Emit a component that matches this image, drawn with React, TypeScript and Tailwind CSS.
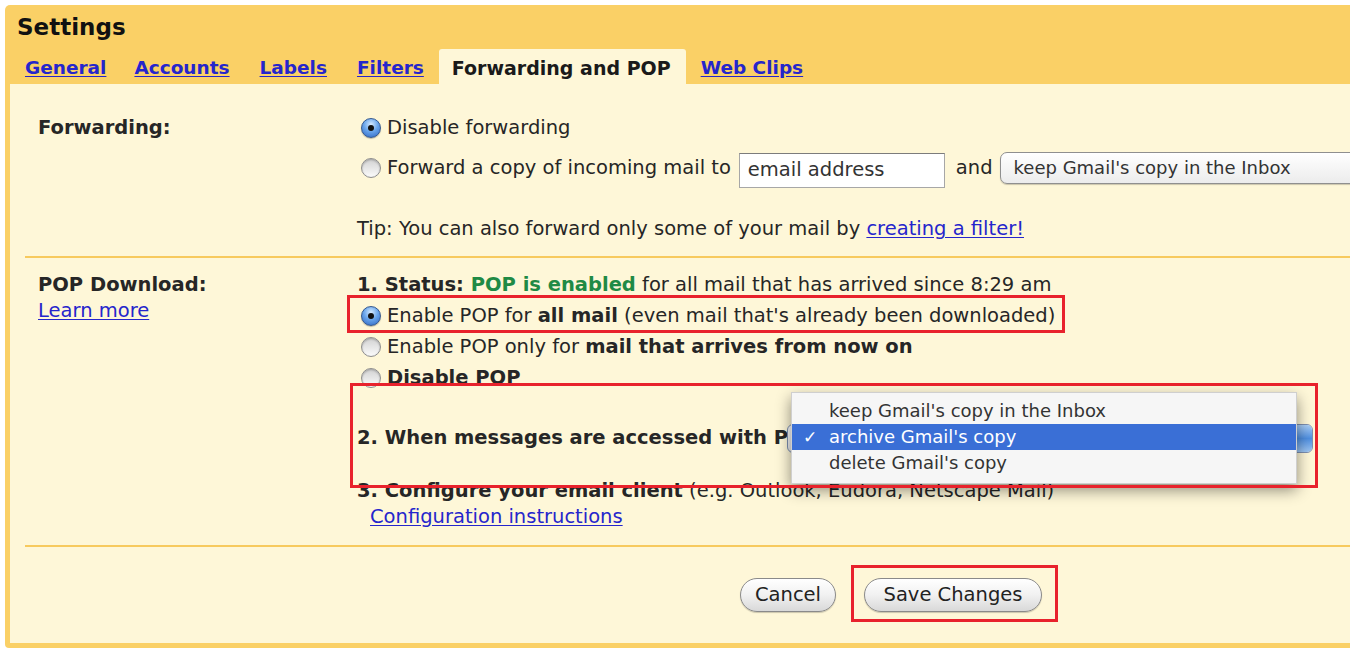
import React from "react";

function Radio({ checked }: { checked?: boolean }) {
  if (checked) {
    return (
      <span className="shrink-0 w-[20px] h-[20px] rounded-full border border-[#35598f] bg-[radial-gradient(circle_at_50%_30%,#d6ebff_0%,#6aa6ec_45%,#2b63c0_100%)] flex items-center justify-center shadow-[0_1px_1px_rgba(0,0,0,0.25)]">
        <span className="w-[6px] h-[6px] rounded-full bg-[#111]" />
      </span>
    );
  }
  return (
    <span className="shrink-0 w-[20px] h-[20px] rounded-full border border-[#8e8e8e] bg-gradient-to-b from-[#d2d2d2] to-[#fbfbfb] shadow-[inset_0_1px_2px_rgba(0,0,0,0.25)]" />
  );
}

function Link({ children }: { children: React.ReactNode }) {
  return <span className="text-[#2525cc] underline underline-offset-2">{children}</span>;
}

export default function App() {
  return (
    <div className="w-[1350px] h-[657px] overflow-hidden bg-white font-['DejaVu_Sans',sans-serif] text-[#262626] text-[19.5px] leading-none whitespace-nowrap">
      <div className="ml-[5px] mt-[5px] w-[1420px] bg-[#fad066] rounded-tl-[5px] rounded-bl-[4px] pl-[5px] pb-[5px]">
        {/* Title */}
        <div className="h-[44px] pl-[7px] flex items-center text-[23px] font-bold text-[#111]">
          Settings
        </div>
        {/* Tabs */}
        <div className="h-[35px] flex items-stretch text-[18.5px] font-bold">
          <div className="pl-[15px] pr-[14px] flex items-center pt-[3px]"><Link>General</Link></div>
          <div className="pl-[14px] pr-[15px] flex items-center pt-[3px]"><Link>Accounts</Link></div>
          <div className="pl-[15px] pr-[15px] flex items-center pt-[3px]"><Link>Labels</Link></div>
          <div className="pl-[15px] pr-[15px] flex items-center pt-[3px]"><Link>Filters</Link></div>
          <div className="pl-[13px] pr-[15px] flex items-center pt-[3px] bg-[#fef7d8] rounded-t-[3px] text-[#1a1a1a] text-[19px]">Forwarding and POP</div>
          <div className="px-[15px] flex items-center pt-[3px]"><Link>Web Clips</Link></div>
        </div>
        {/* Content */}
        <div className="bg-[#fef7d8] px-[15px]">
          {/* Forwarding */}
          <div className="flex pl-[13px] pt-[29px] pb-[15px] border-b-2 border-[#f7ca5e]">
            <div className="w-[319px] shrink-0 h-[30px] flex items-center font-bold">Forwarding:</div>
            <div className="flex flex-col">
              <div className="h-[30px] flex items-center pl-[4px]">
                <Radio checked />
                <span className="ml-[6px]">Disable forwarding</span>
              </div>
              <div className="mt-[5px] h-[40px] flex items-center pl-[4px]">
                <Radio />
                <span className="ml-[6px]">Forward a copy of incoming mail to</span>
                <div className="ml-[8px] w-[206px] h-[35px] mt-[4px] border border-[#a7a7a7] border-t-[#7c7c7c] bg-white flex items-center pl-[8px] text-[#333]">
                  email address
                </div>
                <span className="ml-[11px]">and</span>
                <div className="ml-[7px] w-[420px] h-[32px] rounded-l-[7px] border border-[#8f8f8f] bg-gradient-to-b from-white to-[#ececec] flex items-center pl-[13px] text-[18px] text-[#333] shadow-[0_1px_1px_rgba(0,0,0,0.2)]">
                  keep Gmail's copy in the Inbox
                </div>
              </div>
              <div className="mt-[29px] h-[24px] flex items-center">
                <span>Tip: You can also forward only some of your mail by&nbsp;</span>
                <Link>creating a filter!</Link>
              </div>
            </div>
          </div>

          {/* POP Download */}
          <div className="relative flex pl-[13px] pt-[11px] pb-[15px] border-b-2 border-[#f7ca5e]">
            <div className="w-[319px] shrink-0">
              <div className="h-[31px] flex items-center font-bold">POP Download:</div>
              <div className="h-[22px] flex items-center"><Link>Learn more</Link></div>
            </div>
            <div className="flex flex-col">
              <div className="h-[31px] flex items-center">
                <span className="font-bold">1. Status:&nbsp;</span>
                <span className="font-bold text-[#1f8a45]">POP is enabled</span>
                <span>&nbsp;for all mail that has arrived since 8:29 am</span>
              </div>
              <div className="h-[31px] flex items-center pl-[4px]">
                <Radio checked />
                <span className="ml-[6px]">Enable POP for&nbsp;</span>
                <span className="font-bold">all mail</span>
                <span>&nbsp;(even mail that's already been downloaded)</span>
              </div>
              <div className="h-[31px] flex items-center pl-[4px]">
                <Radio />
                <span className="ml-[6px]">Enable POP only for&nbsp;</span>
                <span className="font-bold">mail that arrives from now on</span>
              </div>
              <div className="h-[31px] flex items-center pl-[4px]">
                <Radio />
                <span className="ml-[6px] font-bold">Disable POP</span>
              </div>
              <div className="mt-[30px] h-[30px] w-[432px] overflow-hidden flex items-center font-bold">
                2. When messages are accessed with POP
              </div>
              <div className="mt-[25px] h-[26px] flex items-center">
                <span className="font-bold">3. Configure your email client</span>
                <span>&nbsp;(e.g. Outlook, Eudora, Netscape Mail)</span>
              </div>
              <div className="h-[26px] flex items-center pl-[13px]">
                <Link>Configuration instructions</Link>
              </div>
            </div>

            {/* select behind the open menu */}
            <div className="absolute left-[762px] top-[166px] w-[526px] h-[29px] rounded-[6px] border border-[#7d8fb0] bg-gradient-to-b from-white to-[#e8e8e8] overflow-hidden flex justify-end">
              <div className="w-[18px] h-full bg-gradient-to-b from-[#a9cdf5] via-[#4f8fe0] to-[#9cc4f1]" />
            </div>

            {/* open dropdown menu */}
            <div className="absolute left-[766px] top-[134px] w-[506px] h-[92px] bg-[#f6f6f6] border border-[#cfcfcf] shadow-[0_6px_14px_rgba(0,0,0,0.45)] pt-[5px] text-[18px] text-[#333] z-10">
              <div className="h-[26px] flex items-center pl-[37px]">keep Gmail's copy in the Inbox</div>
              <div className="h-[26px] flex items-center bg-[#3a6fd6] text-white">
                <span className="w-[37px] pl-[11px] text-[17px]">✓</span>
                <span>archive Gmail's copy</span>
              </div>
              <div className="h-[26px] flex items-center pl-[37px]">delete Gmail's copy</div>
            </div>

            {/* red annotation boxes */}
            <div className="absolute left-[322px] top-[37px] w-[718px] h-[38px] border-[3px] border-[#e8222c] z-20" />
            <div className="absolute left-[325px] top-[125px] w-[968px] h-[105px] border-[3px] border-[#e8222c] z-20" />
          </div>

          {/* Buttons */}
          <div className="flex items-center pl-[715px] pt-[31px] pb-[31px]">
            <div className="w-[96px] h-[34px] rounded-full border border-[#8a8a8a] bg-gradient-to-b from-white via-[#f1f1f1] to-[#d9d9d9] flex items-center justify-center text-[#222] shadow-[0_1px_1px_rgba(0,0,0,0.2)]">
              Cancel
            </div>
            <div className="relative ml-[28px]">
              <div className="w-[178px] h-[34px] rounded-full border border-[#8a8a8a] bg-gradient-to-b from-white via-[#f1f1f1] to-[#d9d9d9] flex items-center justify-center text-[#222] shadow-[0_1px_1px_rgba(0,0,0,0.2)]">
                Save Changes
              </div>
              <div className="absolute left-[-13px] top-[-13px] w-[207px] h-[57px] border-[3px] border-[#e8222c]" />
            </div>
          </div>
        </div>
      </div>
    </div>
  );
}
